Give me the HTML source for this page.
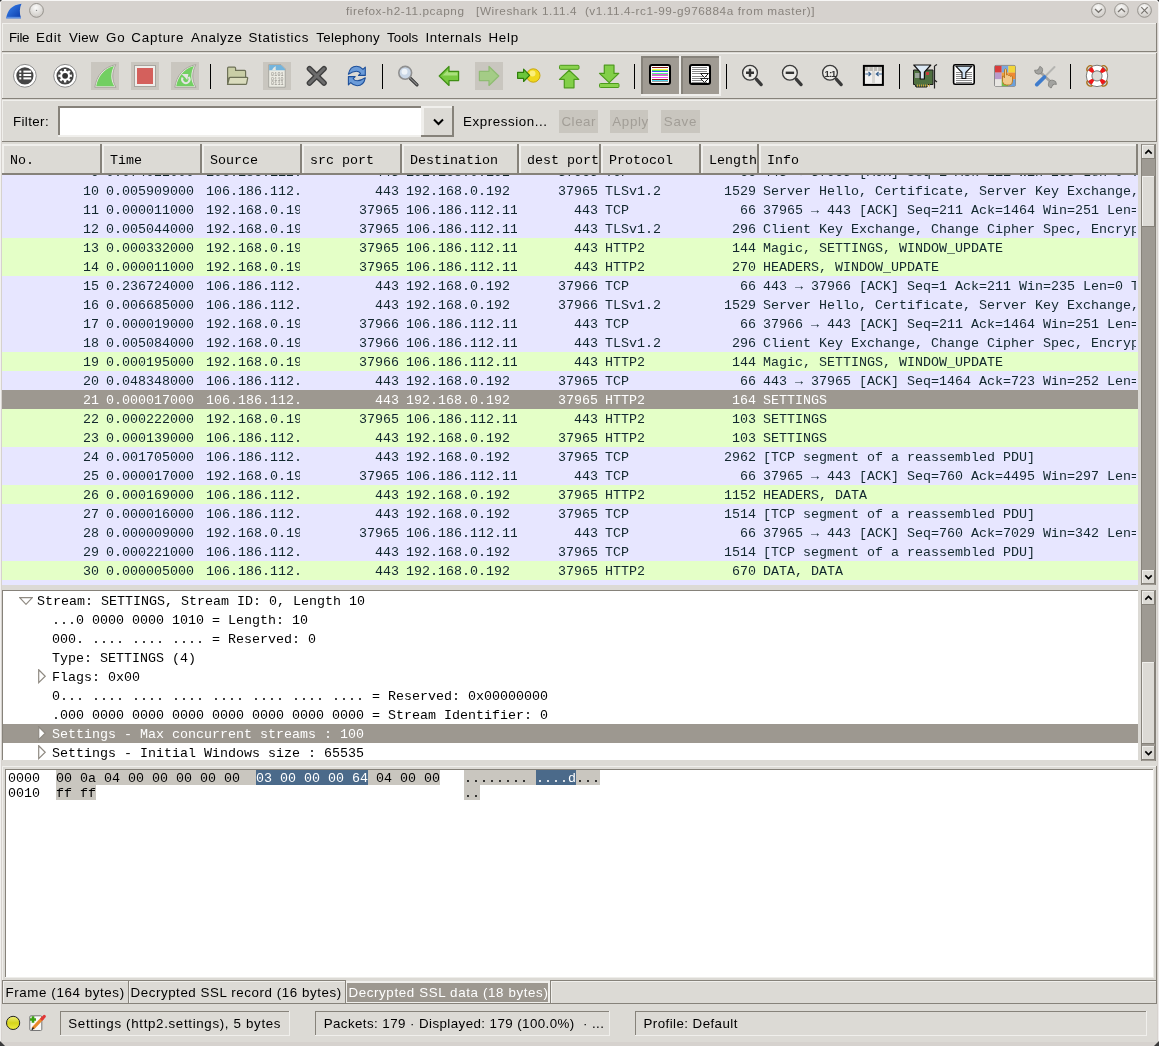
<!DOCTYPE html><html><head><meta charset="utf-8"><style>
html,body{margin:0;padding:0;}
body{width:1159px;height:1046px;overflow:hidden;position:relative;background:#dcdad5;font-family:"Liberation Sans", sans-serif;}
.a{position:absolute;}
.t{position:absolute;white-space:pre;font:13.33px/19px "Liberation Sans", sans-serif;letter-spacing:0.5px;}
.m{position:absolute;white-space:pre;font:13.33px/19px "Liberation Mono", monospace;}
svg{position:absolute;}
</style></head><body><div id="w" style="position:absolute;left:0;top:0;width:1159px;height:1046px;overflow:hidden;will-change:transform">
<div class="a" style="left:0px;top:0px;width:1159px;height:1046px;background:#dcdad5;"></div>
<div class="a" style="left:0px;top:0px;width:1159px;height:23px;background:#f4f3f2;"></div>
<div class="a" style="left:1px;top:1px;width:1157px;height:22px;background:#d6d2ce;border-top-right-radius:3px;border-top-left-radius:1px;"></div>
<div class="a" style="left:0px;top:0px;width:1px;height:1046px;background:#f2f1ef;"></div>
<div class="a" style="left:1px;top:23px;width:1px;height:1023px;background:#d6d2ce;"></div>
<div class="a" style="left:1157px;top:23px;width:1px;height:1023px;background:#d6d2ce;"></div>
<div class="a" style="left:1158px;top:23px;width:1px;height:1023px;background:#eeeceb;"></div>
<div class="t" style="left:346.0px;top:1px;color:#88837d;font:11.75px/19px 'Liberation Sans', sans-serif;letter-spacing:0.582px;">firefox-h2-11.pcapng   [Wireshark 1.11.4  (v1.11.4-rc1-99-g976884a from master)]</div>
<div class="a" style="left:0px;top:0px;width:1159px;height:1px;background:#f7f6f5;"></div>
<svg style="left:0;top:0" width="1159" height="23"><defs><radialGradient id="bg1" cx="0.45" cy="0.3" r="0.75"><stop offset="0" stop-color="#fbfbfa"/><stop offset="1" stop-color="#c9c5c0"/></radialGradient><linearGradient id="fin1" x1="0" y1="0" x2="1" y2="1"><stop offset="0" stop-color="#3b86f0"/><stop offset="1" stop-color="#0b3aa8"/></linearGradient></defs><path d="M6.2 18.3 C7.5 10 12 5 21.5 3.8 C19.5 8 19.3 13 21 18.3 Z" fill="url(#fin1)"/><rect x="6.2" y="16.8" width="14.8" height="1.6" fill="#5c8ee0"/><circle cx="36.5" cy="10.4" r="6.9" fill="url(#bg1)" stroke="#8f8b86" stroke-width="0.9"/><circle cx="1098.5" cy="10.4" r="6.9" fill="url(#bg1)" stroke="#8f8b86" stroke-width="0.9"/><circle cx="1121.5" cy="10.4" r="6.9" fill="url(#bg1)" stroke="#8f8b86" stroke-width="0.9"/><circle cx="1144.5" cy="10.4" r="6.9" fill="url(#bg1)" stroke="#8f8b86" stroke-width="0.9"/><circle cx="36.5" cy="10.4" r="0.7" fill="#888"/><path d="M1095 9 L1098.5 12.3 L1102 9" stroke="#76726d" stroke-width="1.3" fill="none"/><path d="M1118 12 L1121.5 8.7 L1125 12" stroke="#76726d" stroke-width="1.3" fill="none"/><path d="M1141.3 7.2 L1147.7 13.6 M1147.7 7.2 L1141.3 13.6" stroke="#76726d" stroke-width="1.2" fill="none"/></svg>
<div class="a" style="left:2px;top:23px;width:1155px;height:29px;background:#dcdad5;"></div>
<div class="a" style="left:2px;top:23px;width:1155px;height:1px;background:#f0efec;"></div>
<div class="a" style="left:2px;top:23px;width:1px;height:29px;background:#f0efec;"></div>
<div class="a" style="left:2px;top:51px;width:1155px;height:1px;background:#86827a;"></div>
<div class="a" style="left:1156px;top:23px;width:1px;height:29px;background:#86827a;"></div>
<div class="t" style="left:9.0px;top:28px;color:#000;letter-spacing:-0.333px;">File</div>
<div class="t" style="left:36.0px;top:28px;color:#000;letter-spacing:0.667px;">Edit</div>
<div class="t" style="left:69.0px;top:28px;color:#000;letter-spacing:0.333px;">View</div>
<div class="t" style="left:106.05px;top:28px;color:#000;letter-spacing:0.8px;">Go</div>
<div class="t" style="left:131.3px;top:28px;color:#000;letter-spacing:0.8px;">Capture</div>
<div class="t" style="left:191.1px;top:28px;color:#000;letter-spacing:0.567px;">Analyze</div>
<div class="t" style="left:248.5px;top:28px;color:#000;letter-spacing:0.722px;">Statistics</div>
<div class="t" style="left:316.3px;top:28px;color:#000;letter-spacing:0.325px;">Telephony</div>
<div class="t" style="left:387.1px;top:28px;color:#000;letter-spacing:0.0px;">Tools</div>
<div class="t" style="left:425.4px;top:28px;color:#000;letter-spacing:0.6px;">Internals</div>
<div class="t" style="left:488.4px;top:28px;color:#000;letter-spacing:0.8px;">Help</div>
<div class="a" style="left:2px;top:53px;width:1155px;height:1px;background:#f0efec;"></div>
<div class="a" style="left:2px;top:53px;width:1px;height:46px;background:#f0efec;"></div>
<div class="a" style="left:2px;top:98px;width:1155px;height:1px;background:#86827a;"></div>
<div class="a" style="left:1156px;top:53px;width:1px;height:46px;background:#86827a;"></div>
<svg style="left:0;top:0" width="1159" height="100"><rect x="91" y="62" width="28" height="28" fill="#c9c6bf"/><rect x="131" y="62" width="28" height="28" fill="#c9c6bf"/><rect x="171" y="62" width="28" height="28" fill="#c9c6bf"/><rect x="263" y="62" width="28" height="28" fill="#c9c6bf"/><rect x="475" y="62" width="28" height="28" fill="#c9c6bf"/><rect x="210" y="64" width="1" height="25" fill="#000"/><rect x="382" y="64" width="1" height="25" fill="#000"/><rect x="634" y="64" width="1" height="25" fill="#000"/><rect x="726" y="64" width="1" height="25" fill="#000"/><rect x="899" y="64" width="1" height="25" fill="#000"/><rect x="1070" y="64" width="1" height="25" fill="#000"/><rect x="641" y="56" width="40" height="40" fill="#f0efec"/><rect x="641" y="56" width="38" height="38" fill="#86827a"/><rect x="643" y="58" width="36" height="36" fill="#a09b93"/><rect x="681" y="56" width="40" height="40" fill="#f0efec"/><rect x="681" y="56" width="38" height="38" fill="#86827a"/><rect x="683" y="58" width="36" height="36" fill="#a09b93"/><circle cx="24.9" cy="75.8" r="11.4" fill="#fff" stroke="#8d8d8d" stroke-width="1"/><circle cx="24.9" cy="75.8" r="8.6" fill="#454545"/><rect x="19.3" y="70.6" width="2" height="2" fill="#fff"/><rect x="23.4" y="70.6" width="7.8" height="2" fill="#fff"/><rect x="19.3" y="74.0" width="2" height="2" fill="#fff"/><rect x="23.4" y="74.0" width="7.8" height="2" fill="#fff"/><rect x="19.3" y="77.4" width="2" height="2" fill="#fff"/><rect x="23.4" y="77.4" width="7.8" height="2" fill="#fff"/><circle cx="65.1" cy="75.8" r="11.4" fill="#fff" stroke="#8d8d8d" stroke-width="1"/><circle cx="65.1" cy="75.8" r="8.6" fill="#454545"/><path d="M69.99 74.75 L71.89 74.59 L71.89 77.01 L69.99 76.85 L69.78 77.55 L69.30 78.51 L70.76 79.75 L69.05 81.46 L67.81 80.00 L67.18 80.35 L66.15 80.69 L66.31 82.59 L63.89 82.59 L64.05 80.69 L63.35 80.48 L62.39 80.00 L61.15 81.46 L59.44 79.75 L60.90 78.51 L60.55 77.88 L60.21 76.85 L58.31 77.01 L58.31 74.59 L60.21 74.75 L60.42 74.05 L60.90 73.09 L59.44 71.85 L61.15 70.14 L62.39 71.60 L63.02 71.25 L64.05 70.91 L63.89 69.01 L66.31 69.01 L66.15 70.91 L66.85 71.12 L67.81 71.60 L69.05 70.14 L70.76 71.85 L69.30 73.09 L69.65 73.72 Z" fill="#fff"/><circle cx="65.1" cy="75.8" r="2.9" fill="#333"/><path d="M94.8 87.3 C96.5 76 103 67.2 115.8 64.6 C112 72 111.5 80 116 87.3 Z" fill="#eceae5" stroke="#a9a59e" stroke-width="1"/><path d="M96.2 86.2 C98 77 103.5 68.8 114 66 C110.6 72.5 110.2 80 114.3 86.2 Z" fill="#72cf62"/><rect x="134.5" y="65.5" width="21" height="21" fill="#efeeeb" stroke="#a7a49e" stroke-width="1"/><rect x="137" y="68" width="16" height="16" fill="#d4605c"/><path d="M174.8 87.3 C176.5 76 183 67.2 195.8 64.6 C192 72 191.5 80 196 87.3 Z" fill="#eceae5" stroke="#a9a59e" stroke-width="1"/><path d="M176.2 86.2 C178 77 183.5 68.8 194 66 C190.6 72.5 190.2 80 194.3 86.2 Z" fill="#72cf62"/><path d="M188.6 76.9 A3.7 3.7 0 1 1 182.6 77.6" fill="none" stroke="#e6e4e4" stroke-width="2"/><path d="M181.6 74 L188.4 74 L187.2 80 L185.2 77.4 Z" fill="#e6e4e4"/><path d="M227.6 84.4 L227.6 68.2 Q227.6 67.2 228.6 67.2 L234.6 67.2 Q235.6 67.2 235.6 68.2 L235.6 70.4 L244.6 70.4 Q245.6 70.4 245.6 71.4 L245.6 78 L229 78 Z" fill="#c9cea6" stroke="#6d7157" stroke-width="1.2"/><path d="M227.6 84.4 L229.3 78 Q229.5 77.4 230.3 77.4 L247 77.4 Q247.8 77.4 247.7 78.2 L246.6 83.6 Q246.4 84.4 245.6 84.4 Z" fill="#dadcbd" stroke="#6d7157" stroke-width="1.2"/><path d="M268.7 64.7 L281 64.7 L285.2 68.9 L285.2 87.2 L268.7 87.2 Z" fill="#ecebe3" stroke="#9c9994" stroke-width="0.8"/><path d="M269.1 65.1 L281 65.1 L285 69 L285 70.2 L269.1 70.2 Z" fill="#74b4dc"/><path d="M272 70.2 C273 68 274.5 66.5 276 66.2 C275.5 67.5 275.5 69 276 70.2 Z" fill="#e8e8e2"/><text x="271.0" y="76.3" font-family="Liberation Mono" font-size="5" fill="#8e8c86">0</text><text x="274.2" y="76.3" font-family="Liberation Mono" font-size="5" fill="#8e8c86">1</text><text x="277.4" y="76.3" font-family="Liberation Mono" font-size="5" fill="#8e8c86">0</text><text x="280.6" y="76.3" font-family="Liberation Mono" font-size="5" fill="#8e8c86">1</text><text x="271.0" y="80.6" font-family="Liberation Mono" font-size="5" fill="#8e8c86">0</text><text x="274.2" y="80.6" font-family="Liberation Mono" font-size="5" fill="#8e8c86">1</text><text x="277.4" y="80.6" font-family="Liberation Mono" font-size="5" fill="#8e8c86">1</text><text x="280.6" y="80.6" font-family="Liberation Mono" font-size="5" fill="#8e8c86">0</text><text x="271.0" y="84.89999999999999" font-family="Liberation Mono" font-size="5" fill="#8e8c86">0</text><text x="274.2" y="84.89999999999999" font-family="Liberation Mono" font-size="5" fill="#8e8c86">1</text><text x="277.4" y="84.89999999999999" font-family="Liberation Mono" font-size="5" fill="#8e8c86">1</text><text x="280.6" y="84.89999999999999" font-family="Liberation Mono" font-size="5" fill="#8e8c86">1</text><path d="M309.5 68.8 L324 83 M324 68.8 L309.5 83" stroke="#3e3e3e" stroke-width="5.6" stroke-linecap="round"/><path d="M309.5 68.8 L324 83 M324 68.8 L309.5 83" stroke="#6c6c6c" stroke-width="3" stroke-linecap="round"/><path d="M348.4 74.2 C349.5 68.5 353 66.3 356.6 66.3 C359.5 66.3 361.5 67.8 363 69.4 L365.3 67.2 L365.3 75.4 L358.5 75.4 L360.5 73.3 C359.6 72 358.3 71.2 356.4 71.2 C353 71.2 351 72.5 348.4 74.2 Z" fill="#6b9bd8" stroke="#1d4f9a" stroke-width="1.1" stroke-linejoin="round"/><path d="M365.3 77.8 C364.2 83.5 360.7 85.7 357.1 85.7 C354.2 85.7 352.2 84.2 350.7 82.6 L348.4 84.8 L348.4 76.6 L355.2 76.6 L353.2 78.7 C354.1 80 355.4 80.8 357.3 80.8 C360.7 80.8 362.7 79.5 365.3 77.8 Z" fill="#6b9bd8" stroke="#1d4f9a" stroke-width="1.1" stroke-linejoin="round"/><path d="M410.5 78.5 L417 84.8" stroke="#333" stroke-width="3.2" stroke-linecap="round"/><path d="M410.5 78.5 L417 84.8" stroke="#888" stroke-width="1.2" stroke-linecap="round"/><circle cx="405.2" cy="72.8" r="6.4" fill="#c9d6e6" stroke="#8f8f8f" stroke-width="1.6"/><circle cx="404.5" cy="71.8" r="3" fill="#eef3f8"/><path d="M439.2 76 L449 66.5 L449 71.3 L458.6 71.3 L458.6 80.6 L449 80.6 L449 85.5 Z" fill="#78c940" stroke="#3f8f14" stroke-width="1.2" stroke-linejoin="round"/><path d="M442 76 L448 70.2 L448 72.5 L457.4 72.5 L457.4 75.5 L442.5 75.5 Z" fill="#a9e07c"/><path d="M498.8 76 L489 66.5 L489 71.3 L479.4 71.3 L479.4 80.6 L489 80.6 L489 85.5 Z" fill="#a4cc86" stroke="#8fbc72" stroke-width="1.2" stroke-linejoin="round"/><circle cx="533.3" cy="75.5" r="6.7" fill="#f0d81c" stroke="#c9a710" stroke-width="1"/><circle cx="532.5" cy="73.5" r="3" fill="#fbef7a"/><path d="M529.6 75.3 L523.6 69.2 L523.6 72.3 L517.6 72.3 L517.6 78.3 L523.6 78.3 L523.6 81.5 Z" fill="#6cc63c" stroke="#2f7f0a" stroke-width="1.2" stroke-linejoin="round"/><rect x="559.5" y="65.3" width="19.5" height="4" rx="1" fill="#8ad24e" stroke="#4c9a1c" stroke-width="1"/><path d="M569.2 70.2 L578.8 79.4 L574 79.4 L574 87.8 L564.3 87.8 L564.3 79.4 L559.5 79.4 Z" fill="#82cf48" stroke="#4c9a1c" stroke-width="1.2" stroke-linejoin="round"/><rect x="599.5" y="83.5" width="19.5" height="4" rx="1" fill="#8ad24e" stroke="#4c9a1c" stroke-width="1"/><path d="M609.2 82.6 L618.8 73.4 L614 73.4 L614 65.2 L604.3 65.2 L604.3 73.4 L599.5 73.4 Z" fill="#82cf48" stroke="#4c9a1c" stroke-width="1.2" stroke-linejoin="round"/><rect x="650" y="65" width="20" height="19" rx="2" fill="#fff" stroke="#000" stroke-width="2"/><rect x="652" y="67" width="16" height="1" fill="#8a1c1c"/><rect x="652" y="69" width="16" height="1" fill="#ffff50"/><rect x="652" y="70" width="16" height="1" fill="#50e860"/><rect x="652" y="71" width="16" height="1" fill="#4a4aff"/><rect x="652" y="73" width="16" height="1" fill="#50f090"/><rect x="652" y="74" width="16" height="1" fill="#f050f0"/><rect x="652" y="75" width="16" height="1" fill="#a0a0a0"/><rect x="652" y="77" width="16" height="1" fill="#ff55ff"/><rect x="652" y="79" width="16" height="1" fill="#8a1c1c"/><rect x="652" y="80" width="16" height="1" fill="#50d8f0"/><rect x="652" y="81" width="16" height="1" fill="#a0a0a0"/><rect x="690" y="65" width="20" height="19" rx="2" fill="#fff" stroke="#000" stroke-width="2"/><rect x="692" y="67" width="15" height="1" fill="#8a8a8a"/><rect x="692" y="69" width="15" height="1" fill="#8a8a8a"/><rect x="692" y="71" width="15" height="1" fill="#8a8a8a"/><rect x="692" y="73" width="15" height="1" fill="#8a8a8a"/><rect x="692" y="76" width="15" height="1" fill="#8a8a8a"/><rect x="692" y="78" width="15" height="1" fill="#8a8a8a"/><rect x="692" y="80" width="15" height="1" fill="#8a8a8a"/><rect x="692" y="82" width="15" height="1" fill="#8a8a8a"/><path d="M700.5 73.5 L708.5 73.5 L704.5 77.5 Z M700.5 78.5 L708.5 78.5 L704.5 82.5 Z" fill="#fff" stroke="#222" stroke-width="1"/><path d="M756.5 79.3 L761.2 84.6" stroke="#3a3a3a" stroke-width="3.3" stroke-linecap="round"/><circle cx="750" cy="72.8" r="7.4" fill="#ecebe7" stroke="#3a3a3a" stroke-width="1.3"/><path d="M746 72.8 L754 72.8 M750 68.8 L750 76.8" stroke="#333" stroke-width="2.4"/><path d="M796.4 79.3 L801.1 84.6" stroke="#3a3a3a" stroke-width="3.3" stroke-linecap="round"/><circle cx="789.9" cy="72.8" r="7.4" fill="#ecebe7" stroke="#3a3a3a" stroke-width="1.3"/><path d="M785.7 72.8 L794.1 72.8" stroke="#333" stroke-width="2.4"/><path d="M836.5 79.3 L841.2 84.6" stroke="#3a3a3a" stroke-width="3.3" stroke-linecap="round"/><circle cx="830" cy="72.8" r="7.4" fill="#ecebe7" stroke="#3a3a3a" stroke-width="1.3"/><text x="824.6" y="76.6" font-family="Liberation Sans" font-weight="bold" font-size="9.5" fill="#333" letter-spacing="-1">1:1</text><rect x="863.9" y="65.9" width="19" height="19" fill="#f2f1ef" stroke="#000" stroke-width="2"/><rect x="865" y="67" width="17" height="4" fill="#bdbbb6"/><rect x="868.5" y="67" width="0.8" height="4" fill="#f3f3f3"/><rect x="872.9" y="67" width="0.8" height="4" fill="#f3f3f3"/><rect x="877.3" y="67" width="0.8" height="4" fill="#f3f3f3"/><rect x="872" y="71" width="3" height="13" fill="#d8d7d3"/><path d="M865.3 74 L870.5 74 M868.5 72 L870.8 74 L868.5 76 M882 74 L876.6 74 M878.6 72 L876.3 74 L878.6 76" stroke="#3c6490" stroke-width="1.2" fill="none"/><path d="M913.5 70 L933 70 L933 84.5 L928 84.5 L927 87 L916 87 L915 84.5 L913.5 84.5 Z" fill="#4f7040" stroke="#1c1c1c" stroke-width="1"/><rect x="915" y="73" width="6" height="5" fill="#9aa59a"/><rect x="922" y="72" width="3" height="3" fill="#c83c3c"/><rect x="926" y="72" width="3" height="3" fill="#c83c3c"/><rect x="917" y="84.5" width="1" height="2" fill="#d0a640"/><rect x="919" y="84.5" width="1" height="2" fill="#d0a640"/><rect x="921" y="84.5" width="1" height="2" fill="#d0a640"/><rect x="923" y="84.5" width="1" height="2" fill="#d0a640"/><rect x="925" y="84.5" width="1" height="2" fill="#d0a640"/><rect x="927" y="84.5" width="1" height="2" fill="#d0a640"/><rect x="929" y="84.5" width="1" height="2" fill="#d0a640"/><path d="M934.5 66 L934.5 88.5 M934.5 66 L937 64.5 M934.5 80 L937 82" stroke="#222" stroke-width="1.2" fill="none"/><path d="M913.8 65 L930.8 65 L924.4 72.2 L924.4 79 L920.2 79 L920.2 72.2 Z" fill="#dce9f5" stroke="#111" stroke-width="1.2" stroke-linejoin="round"/><rect x="953.6" y="64.8" width="20.6" height="19.4" rx="1.5" fill="#fff" stroke="#000" stroke-width="1.6"/><rect x="956" y="72" width="16" height="1" fill="#8a8a8a"/><rect x="956" y="74" width="16" height="1" fill="#8a8a8a"/><rect x="956" y="76" width="16" height="1" fill="#8a8a8a"/><rect x="956" y="78" width="16" height="1" fill="#8a8a8a"/><rect x="956" y="80" width="16" height="1" fill="#8a8a8a"/><rect x="956" y="82" width="16" height="1" fill="#8a8a8a"/><path d="M955.8 66.2 L972 66.2 L965.8 72.5 L965.8 78.5 L962 78.5 L962 72.5 Z" fill="#d2e4f4" stroke="#111" stroke-width="1.1" stroke-linejoin="round"/><rect x="994.5" y="65.4" width="21" height="21" rx="1.5" fill="#e8e6e2" stroke="#8a8a8a" stroke-width="1"/><rect x="995.0" y="65.9" width="6.8" height="6.8" fill="#d93c3c"/><rect x="1001.7" y="65.9" width="6.8" height="6.8" fill="#7aa6dc"/><rect x="1008.4" y="65.9" width="6.8" height="6.8" fill="#f2d63a"/><rect x="995.0" y="72.6" width="6.8" height="6.8" fill="#b99acb"/><rect x="1001.7" y="72.6" width="6.8" height="6.8" fill="#f0a040"/><rect x="1008.4" y="72.6" width="6.8" height="6.8" fill="#ef8a33"/><rect x="995.0" y="79.3" width="6.8" height="6.8" fill="#e8e6e2"/><rect x="1001.7" y="79.3" width="6.8" height="6.8" fill="#6fc04a"/><rect x="1008.4" y="79.3" width="6.8" height="6.8" fill="#6aa0dc"/><path d="M1002.5 76 L1002.5 81.5 Q1003 85 1006.5 85 L1010 85 Q1012.5 84.5 1012.5 81 L1012.5 76.5 Q1011.5 75.5 1010.5 76.5 Q1010 74.5 1008.5 75.5 Q1008 74 1006.5 75 L1006.5 69.5 Q1005.5 68 1004.5 69.5 L1004.5 78 Q1003.5 75 1002.5 76 Z" fill="#f2c98a" stroke="#b8741e" stroke-width="0.9"/><path d="M1038.5 70.5 L1053 84" stroke="#a3a3a0" stroke-width="2.6" stroke-linecap="round"/><path d="M1034.6 70.2 A4 4 0 1 0 1039.8 66.4 L1038.2 69.8 L1036.4 70.2 Z" fill="#a3a3a0" stroke="#7d7d7a" stroke-width="0.8"/><path d="M1056.4 84.4 A4 4 0 1 0 1051.2 88 L1052.8 84.8 L1054.6 84.2 Z" fill="#a3a3a0" stroke="#7d7d7a" stroke-width="0.8"/><path d="M1054.5 67 L1045 76.5" stroke="#b5b5b2" stroke-width="2" stroke-linecap="round"/><path d="M1044.5 77 L1036.8 84.6" stroke="#3f7ccc" stroke-width="3.8" stroke-linecap="round"/><circle cx="1097" cy="75.9" r="7.9" fill="none" stroke="#fff" stroke-width="5.6"/><circle cx="1097" cy="75.9" r="7.9" fill="none" stroke="#f01818" stroke-width="5.6" stroke-dasharray="4 8.4" stroke-dashoffset="-4.2"/><circle cx="1097" cy="75.9" r="10.7" fill="none" stroke="#7a7a7a" stroke-width="1"/><circle cx="1097" cy="75.9" r="5.1" fill="#dcdad5" stroke="#7a7a7a" stroke-width="1"/><path d="M1087.55 71.46 A3.6 3.6 0 0 1 1092.56 66.45" fill="none" stroke="#a8701c" stroke-width="1.3"/><path d="M1101.44 66.45 A3.6 3.6 0 0 1 1106.45 71.46" fill="none" stroke="#a8701c" stroke-width="1.3"/><path d="M1092.56 85.35 A3.6 3.6 0 0 1 1087.55 80.34" fill="none" stroke="#a8701c" stroke-width="1.3"/><path d="M1106.45 80.34 A3.6 3.6 0 0 1 1101.44 85.35" fill="none" stroke="#a8701c" stroke-width="1.3"/></svg>
<div class="a" style="left:2px;top:100px;width:1155px;height:1px;background:#f0efec;"></div>
<div class="a" style="left:2px;top:100px;width:1px;height:42px;background:#f0efec;"></div>
<div class="a" style="left:2px;top:141px;width:1155px;height:1px;background:#86827a;"></div>
<div class="a" style="left:1156px;top:100px;width:1px;height:42px;background:#86827a;"></div>
<div class="t" style="left:13.0px;top:112px;color:#000;letter-spacing:0.383px;">Filter:</div>
<div class="a" style="left:58px;top:106px;width:366px;height:31px;background:#ffffff;"></div>
<div class="a" style="left:58px;top:106px;width:366px;height:2px;background:#86827a;"></div>
<div class="a" style="left:58px;top:106px;width:2px;height:31px;background:#86827a;"></div>
<div class="a" style="left:58px;top:135px;width:366px;height:2px;background:#f0efec;"></div>
<div class="a" style="left:421px;top:106px;width:33px;height:31px;background:#dcdad5;"></div>
<div class="a" style="left:421px;top:106px;width:33px;height:2px;background:#f0efec;"></div>
<div class="a" style="left:421px;top:106px;width:3px;height:31px;background:#f0efec;"></div>
<div class="a" style="left:421px;top:135px;width:33px;height:2px;background:#86827a;"></div>
<div class="a" style="left:452px;top:106px;width:2px;height:31px;background:#86827a;"></div>
<svg style="left:433px;top:118px" width="11" height="8"><path d="M1 1.5 L5.5 6 L10 1.5" stroke="#000" stroke-width="2" fill="none"/></svg>
<div class="t" style="left:463.0px;top:112px;color:#000;letter-spacing:0.583px;">Expression...</div>
<div class="a" style="left:559px;top:110px;width:39px;height:23px;background:#c9c6bf;"></div>
<div class="t" style="left:561.4px;top:112px;color:#a29e97;letter-spacing:0.575px;">Clear</div>
<div class="a" style="left:610px;top:110px;width:38px;height:23px;background:#c9c6bf;"></div>
<div class="t" style="left:612.3px;top:112px;color:#a29e97;letter-spacing:0.65px;">Apply</div>
<div class="a" style="left:661px;top:110px;width:39px;height:23px;background:#c9c6bf;"></div>
<div class="t" style="left:663.7px;top:112px;color:#a29e97;letter-spacing:0.8px;">Save</div>
<div class="a" style="left:2px;top:143px;width:1155px;height:442px;background:#dcdad5;"></div>
<div class="a" style="left:2px;top:144px;width:1136px;height:31px;background:#dcdad5;"></div>
<div class="a" style="left:2px;top:144px;width:100px;height:2px;background:#f0efec;"></div>
<div class="a" style="left:2px;top:144px;width:2px;height:31px;background:#f0efec;"></div>
<div class="a" style="left:2px;top:173px;width:100px;height:2px;background:#86827a;"></div>
<div class="a" style="left:100px;top:144px;width:2px;height:31px;background:#86827a;"></div>
<div class="m" style="left:10px;top:151px;width:89px;overflow:hidden;color:#000">No.</div>
<div class="a" style="left:102px;top:144px;width:100px;height:2px;background:#f0efec;"></div>
<div class="a" style="left:102px;top:144px;width:2px;height:31px;background:#f0efec;"></div>
<div class="a" style="left:102px;top:173px;width:100px;height:2px;background:#86827a;"></div>
<div class="a" style="left:200px;top:144px;width:2px;height:31px;background:#86827a;"></div>
<div class="m" style="left:110px;top:151px;width:89px;overflow:hidden;color:#000">Time</div>
<div class="a" style="left:202px;top:144px;width:100px;height:2px;background:#f0efec;"></div>
<div class="a" style="left:202px;top:144px;width:2px;height:31px;background:#f0efec;"></div>
<div class="a" style="left:202px;top:173px;width:100px;height:2px;background:#86827a;"></div>
<div class="a" style="left:300px;top:144px;width:2px;height:31px;background:#86827a;"></div>
<div class="m" style="left:210px;top:151px;width:89px;overflow:hidden;color:#000">Source</div>
<div class="a" style="left:302px;top:144px;width:100px;height:2px;background:#f0efec;"></div>
<div class="a" style="left:302px;top:144px;width:2px;height:31px;background:#f0efec;"></div>
<div class="a" style="left:302px;top:173px;width:100px;height:2px;background:#86827a;"></div>
<div class="a" style="left:400px;top:144px;width:2px;height:31px;background:#86827a;"></div>
<div class="m" style="left:310px;top:151px;width:89px;overflow:hidden;color:#000">src port</div>
<div class="a" style="left:402px;top:144px;width:117px;height:2px;background:#f0efec;"></div>
<div class="a" style="left:402px;top:144px;width:2px;height:31px;background:#f0efec;"></div>
<div class="a" style="left:402px;top:173px;width:117px;height:2px;background:#86827a;"></div>
<div class="a" style="left:517px;top:144px;width:2px;height:31px;background:#86827a;"></div>
<div class="m" style="left:410px;top:151px;width:106px;overflow:hidden;color:#000">Destination</div>
<div class="a" style="left:519px;top:144px;width:82px;height:2px;background:#f0efec;"></div>
<div class="a" style="left:519px;top:144px;width:2px;height:31px;background:#f0efec;"></div>
<div class="a" style="left:519px;top:173px;width:82px;height:2px;background:#86827a;"></div>
<div class="a" style="left:599px;top:144px;width:2px;height:31px;background:#86827a;"></div>
<div class="m" style="left:527px;top:151px;width:71px;overflow:hidden;color:#000">dest port</div>
<div class="a" style="left:601px;top:144px;width:100px;height:2px;background:#f0efec;"></div>
<div class="a" style="left:601px;top:144px;width:2px;height:31px;background:#f0efec;"></div>
<div class="a" style="left:601px;top:173px;width:100px;height:2px;background:#86827a;"></div>
<div class="a" style="left:699px;top:144px;width:2px;height:31px;background:#86827a;"></div>
<div class="m" style="left:609px;top:151px;width:89px;overflow:hidden;color:#000">Protocol</div>
<div class="a" style="left:701px;top:144px;width:58px;height:2px;background:#f0efec;"></div>
<div class="a" style="left:701px;top:144px;width:2px;height:31px;background:#f0efec;"></div>
<div class="a" style="left:701px;top:173px;width:58px;height:2px;background:#86827a;"></div>
<div class="a" style="left:757px;top:144px;width:2px;height:31px;background:#86827a;"></div>
<div class="m" style="left:709px;top:151px;width:47px;overflow:hidden;color:#000">Length</div>
<div class="a" style="left:759px;top:144px;width:379px;height:2px;background:#f0efec;"></div>
<div class="a" style="left:759px;top:144px;width:2px;height:31px;background:#f0efec;"></div>
<div class="a" style="left:759px;top:173px;width:379px;height:2px;background:#86827a;"></div>
<div class="a" style="left:1136px;top:144px;width:2px;height:31px;background:#86827a;"></div>
<div class="m" style="left:767px;top:151px;width:368px;overflow:hidden;color:#000">Info</div>
<div class="a" style="left:2px;top:175px;width:1136px;height:410px;overflow:hidden">
<div class="a" style="left:0;top:-13px;width:1136px;height:19px;background:#e7e6ff;color:#12272e">
<div class="m" style="left:0px;top:1px;width:97px;text-align:right;overflow:hidden">9</div>
<div class="m" style="left:104px;top:1px;width:94px;overflow:hidden">0.074022000</div>
<div class="m" style="left:204px;top:1px;width:94px;overflow:hidden">106.186.112.</div>
<div class="m" style="left:300px;top:1px;width:97px;text-align:right;overflow:hidden">443</div>
<div class="m" style="left:404px;top:1px;width:111px;overflow:hidden">192.168.0.192</div>
<div class="m" style="left:517px;top:1px;width:79px;text-align:right;overflow:hidden">37965</div>
<div class="m" style="left:603px;top:1px;width:94px;overflow:hidden">TCP</div>
<div class="m" style="left:699px;top:1px;width:55px;text-align:right;overflow:hidden">66</div>
<div class="m" style="left:761px;top:1px;width:373px;overflow:hidden">443 → 37965 [ACK] Seq=1 Ack=211 Win=235 Len=0 TSval</div>
</div>
<div class="a" style="left:0;top:6px;width:1136px;height:19px;background:#e7e6ff;color:#12272e">
<div class="m" style="left:0px;top:1px;width:97px;text-align:right;overflow:hidden">10</div>
<div class="m" style="left:104px;top:1px;width:94px;overflow:hidden">0.005909000</div>
<div class="m" style="left:204px;top:1px;width:94px;overflow:hidden">106.186.112.</div>
<div class="m" style="left:300px;top:1px;width:97px;text-align:right;overflow:hidden">443</div>
<div class="m" style="left:404px;top:1px;width:111px;overflow:hidden">192.168.0.192</div>
<div class="m" style="left:517px;top:1px;width:79px;text-align:right;overflow:hidden">37965</div>
<div class="m" style="left:603px;top:1px;width:94px;overflow:hidden">TLSv1.2</div>
<div class="m" style="left:699px;top:1px;width:55px;text-align:right;overflow:hidden">1529</div>
<div class="m" style="left:761px;top:1px;width:373px;overflow:hidden">Server Hello, Certificate, Server Key Exchange, Server Hello Done</div>
</div>
<div class="a" style="left:0;top:25px;width:1136px;height:19px;background:#e7e6ff;color:#12272e">
<div class="m" style="left:0px;top:1px;width:97px;text-align:right;overflow:hidden">11</div>
<div class="m" style="left:104px;top:1px;width:94px;overflow:hidden">0.000011000</div>
<div class="m" style="left:204px;top:1px;width:94px;overflow:hidden">192.168.0.192</div>
<div class="m" style="left:300px;top:1px;width:97px;text-align:right;overflow:hidden">37965</div>
<div class="m" style="left:404px;top:1px;width:111px;overflow:hidden">106.186.112.116</div>
<div class="m" style="left:517px;top:1px;width:79px;text-align:right;overflow:hidden">443</div>
<div class="m" style="left:603px;top:1px;width:94px;overflow:hidden">TCP</div>
<div class="m" style="left:699px;top:1px;width:55px;text-align:right;overflow:hidden">66</div>
<div class="m" style="left:761px;top:1px;width:373px;overflow:hidden">37965 → 443 [ACK] Seq=211 Ack=1464 Win=251 Len=0</div>
</div>
<div class="a" style="left:0;top:44px;width:1136px;height:19px;background:#e7e6ff;color:#12272e">
<div class="m" style="left:0px;top:1px;width:97px;text-align:right;overflow:hidden">12</div>
<div class="m" style="left:104px;top:1px;width:94px;overflow:hidden">0.005044000</div>
<div class="m" style="left:204px;top:1px;width:94px;overflow:hidden">192.168.0.192</div>
<div class="m" style="left:300px;top:1px;width:97px;text-align:right;overflow:hidden">37965</div>
<div class="m" style="left:404px;top:1px;width:111px;overflow:hidden">106.186.112.116</div>
<div class="m" style="left:517px;top:1px;width:79px;text-align:right;overflow:hidden">443</div>
<div class="m" style="left:603px;top:1px;width:94px;overflow:hidden">TLSv1.2</div>
<div class="m" style="left:699px;top:1px;width:55px;text-align:right;overflow:hidden">296</div>
<div class="m" style="left:761px;top:1px;width:373px;overflow:hidden">Client Key Exchange, Change Cipher Spec, Encrypted Handshake</div>
</div>
<div class="a" style="left:0;top:63px;width:1136px;height:19px;background:#e4ffc7;color:#12272e">
<div class="m" style="left:0px;top:1px;width:97px;text-align:right;overflow:hidden">13</div>
<div class="m" style="left:104px;top:1px;width:94px;overflow:hidden">0.000332000</div>
<div class="m" style="left:204px;top:1px;width:94px;overflow:hidden">192.168.0.192</div>
<div class="m" style="left:300px;top:1px;width:97px;text-align:right;overflow:hidden">37965</div>
<div class="m" style="left:404px;top:1px;width:111px;overflow:hidden">106.186.112.116</div>
<div class="m" style="left:517px;top:1px;width:79px;text-align:right;overflow:hidden">443</div>
<div class="m" style="left:603px;top:1px;width:94px;overflow:hidden">HTTP2</div>
<div class="m" style="left:699px;top:1px;width:55px;text-align:right;overflow:hidden">144</div>
<div class="m" style="left:761px;top:1px;width:373px;overflow:hidden">Magic, SETTINGS, WINDOW_UPDATE</div>
</div>
<div class="a" style="left:0;top:82px;width:1136px;height:19px;background:#e4ffc7;color:#12272e">
<div class="m" style="left:0px;top:1px;width:97px;text-align:right;overflow:hidden">14</div>
<div class="m" style="left:104px;top:1px;width:94px;overflow:hidden">0.000011000</div>
<div class="m" style="left:204px;top:1px;width:94px;overflow:hidden">192.168.0.192</div>
<div class="m" style="left:300px;top:1px;width:97px;text-align:right;overflow:hidden">37965</div>
<div class="m" style="left:404px;top:1px;width:111px;overflow:hidden">106.186.112.116</div>
<div class="m" style="left:517px;top:1px;width:79px;text-align:right;overflow:hidden">443</div>
<div class="m" style="left:603px;top:1px;width:94px;overflow:hidden">HTTP2</div>
<div class="m" style="left:699px;top:1px;width:55px;text-align:right;overflow:hidden">270</div>
<div class="m" style="left:761px;top:1px;width:373px;overflow:hidden">HEADERS, WINDOW_UPDATE</div>
</div>
<div class="a" style="left:0;top:101px;width:1136px;height:19px;background:#e7e6ff;color:#12272e">
<div class="m" style="left:0px;top:1px;width:97px;text-align:right;overflow:hidden">15</div>
<div class="m" style="left:104px;top:1px;width:94px;overflow:hidden">0.236724000</div>
<div class="m" style="left:204px;top:1px;width:94px;overflow:hidden">106.186.112.</div>
<div class="m" style="left:300px;top:1px;width:97px;text-align:right;overflow:hidden">443</div>
<div class="m" style="left:404px;top:1px;width:111px;overflow:hidden">192.168.0.192</div>
<div class="m" style="left:517px;top:1px;width:79px;text-align:right;overflow:hidden">37966</div>
<div class="m" style="left:603px;top:1px;width:94px;overflow:hidden">TCP</div>
<div class="m" style="left:699px;top:1px;width:55px;text-align:right;overflow:hidden">66</div>
<div class="m" style="left:761px;top:1px;width:373px;overflow:hidden">443 → 37966 [ACK] Seq=1 Ack=211 Win=235 Len=0 TSval</div>
</div>
<div class="a" style="left:0;top:120px;width:1136px;height:19px;background:#e7e6ff;color:#12272e">
<div class="m" style="left:0px;top:1px;width:97px;text-align:right;overflow:hidden">16</div>
<div class="m" style="left:104px;top:1px;width:94px;overflow:hidden">0.006685000</div>
<div class="m" style="left:204px;top:1px;width:94px;overflow:hidden">106.186.112.</div>
<div class="m" style="left:300px;top:1px;width:97px;text-align:right;overflow:hidden">443</div>
<div class="m" style="left:404px;top:1px;width:111px;overflow:hidden">192.168.0.192</div>
<div class="m" style="left:517px;top:1px;width:79px;text-align:right;overflow:hidden">37966</div>
<div class="m" style="left:603px;top:1px;width:94px;overflow:hidden">TLSv1.2</div>
<div class="m" style="left:699px;top:1px;width:55px;text-align:right;overflow:hidden">1529</div>
<div class="m" style="left:761px;top:1px;width:373px;overflow:hidden">Server Hello, Certificate, Server Key Exchange, Server Hello Done</div>
</div>
<div class="a" style="left:0;top:139px;width:1136px;height:19px;background:#e7e6ff;color:#12272e">
<div class="m" style="left:0px;top:1px;width:97px;text-align:right;overflow:hidden">17</div>
<div class="m" style="left:104px;top:1px;width:94px;overflow:hidden">0.000019000</div>
<div class="m" style="left:204px;top:1px;width:94px;overflow:hidden">192.168.0.192</div>
<div class="m" style="left:300px;top:1px;width:97px;text-align:right;overflow:hidden">37966</div>
<div class="m" style="left:404px;top:1px;width:111px;overflow:hidden">106.186.112.116</div>
<div class="m" style="left:517px;top:1px;width:79px;text-align:right;overflow:hidden">443</div>
<div class="m" style="left:603px;top:1px;width:94px;overflow:hidden">TCP</div>
<div class="m" style="left:699px;top:1px;width:55px;text-align:right;overflow:hidden">66</div>
<div class="m" style="left:761px;top:1px;width:373px;overflow:hidden">37966 → 443 [ACK] Seq=211 Ack=1464 Win=251 Len=0</div>
</div>
<div class="a" style="left:0;top:158px;width:1136px;height:19px;background:#e7e6ff;color:#12272e">
<div class="m" style="left:0px;top:1px;width:97px;text-align:right;overflow:hidden">18</div>
<div class="m" style="left:104px;top:1px;width:94px;overflow:hidden">0.005084000</div>
<div class="m" style="left:204px;top:1px;width:94px;overflow:hidden">192.168.0.192</div>
<div class="m" style="left:300px;top:1px;width:97px;text-align:right;overflow:hidden">37966</div>
<div class="m" style="left:404px;top:1px;width:111px;overflow:hidden">106.186.112.116</div>
<div class="m" style="left:517px;top:1px;width:79px;text-align:right;overflow:hidden">443</div>
<div class="m" style="left:603px;top:1px;width:94px;overflow:hidden">TLSv1.2</div>
<div class="m" style="left:699px;top:1px;width:55px;text-align:right;overflow:hidden">296</div>
<div class="m" style="left:761px;top:1px;width:373px;overflow:hidden">Client Key Exchange, Change Cipher Spec, Encrypted Handshake</div>
</div>
<div class="a" style="left:0;top:177px;width:1136px;height:19px;background:#e4ffc7;color:#12272e">
<div class="m" style="left:0px;top:1px;width:97px;text-align:right;overflow:hidden">19</div>
<div class="m" style="left:104px;top:1px;width:94px;overflow:hidden">0.000195000</div>
<div class="m" style="left:204px;top:1px;width:94px;overflow:hidden">192.168.0.192</div>
<div class="m" style="left:300px;top:1px;width:97px;text-align:right;overflow:hidden">37966</div>
<div class="m" style="left:404px;top:1px;width:111px;overflow:hidden">106.186.112.116</div>
<div class="m" style="left:517px;top:1px;width:79px;text-align:right;overflow:hidden">443</div>
<div class="m" style="left:603px;top:1px;width:94px;overflow:hidden">HTTP2</div>
<div class="m" style="left:699px;top:1px;width:55px;text-align:right;overflow:hidden">144</div>
<div class="m" style="left:761px;top:1px;width:373px;overflow:hidden">Magic, SETTINGS, WINDOW_UPDATE</div>
</div>
<div class="a" style="left:0;top:196px;width:1136px;height:19px;background:#e7e6ff;color:#12272e">
<div class="m" style="left:0px;top:1px;width:97px;text-align:right;overflow:hidden">20</div>
<div class="m" style="left:104px;top:1px;width:94px;overflow:hidden">0.048348000</div>
<div class="m" style="left:204px;top:1px;width:94px;overflow:hidden">106.186.112.</div>
<div class="m" style="left:300px;top:1px;width:97px;text-align:right;overflow:hidden">443</div>
<div class="m" style="left:404px;top:1px;width:111px;overflow:hidden">192.168.0.192</div>
<div class="m" style="left:517px;top:1px;width:79px;text-align:right;overflow:hidden">37965</div>
<div class="m" style="left:603px;top:1px;width:94px;overflow:hidden">TCP</div>
<div class="m" style="left:699px;top:1px;width:55px;text-align:right;overflow:hidden">66</div>
<div class="m" style="left:761px;top:1px;width:373px;overflow:hidden">443 → 37965 [ACK] Seq=1464 Ack=723 Win=252 Len=0</div>
</div>
<div class="a" style="left:0;top:215px;width:1136px;height:19px;background:#9d9890;color:#ffffff">
<div class="m" style="left:0px;top:1px;width:97px;text-align:right;overflow:hidden">21</div>
<div class="m" style="left:104px;top:1px;width:94px;overflow:hidden">0.000017000</div>
<div class="m" style="left:204px;top:1px;width:94px;overflow:hidden">106.186.112.</div>
<div class="m" style="left:300px;top:1px;width:97px;text-align:right;overflow:hidden">443</div>
<div class="m" style="left:404px;top:1px;width:111px;overflow:hidden">192.168.0.192</div>
<div class="m" style="left:517px;top:1px;width:79px;text-align:right;overflow:hidden">37965</div>
<div class="m" style="left:603px;top:1px;width:94px;overflow:hidden">HTTP2</div>
<div class="m" style="left:699px;top:1px;width:55px;text-align:right;overflow:hidden">164</div>
<div class="m" style="left:761px;top:1px;width:373px;overflow:hidden">SETTINGS</div>
</div>
<div class="a" style="left:0;top:234px;width:1136px;height:19px;background:#e4ffc7;color:#12272e">
<div class="m" style="left:0px;top:1px;width:97px;text-align:right;overflow:hidden">22</div>
<div class="m" style="left:104px;top:1px;width:94px;overflow:hidden">0.000222000</div>
<div class="m" style="left:204px;top:1px;width:94px;overflow:hidden">192.168.0.192</div>
<div class="m" style="left:300px;top:1px;width:97px;text-align:right;overflow:hidden">37965</div>
<div class="m" style="left:404px;top:1px;width:111px;overflow:hidden">106.186.112.116</div>
<div class="m" style="left:517px;top:1px;width:79px;text-align:right;overflow:hidden">443</div>
<div class="m" style="left:603px;top:1px;width:94px;overflow:hidden">HTTP2</div>
<div class="m" style="left:699px;top:1px;width:55px;text-align:right;overflow:hidden">103</div>
<div class="m" style="left:761px;top:1px;width:373px;overflow:hidden">SETTINGS</div>
</div>
<div class="a" style="left:0;top:253px;width:1136px;height:19px;background:#e4ffc7;color:#12272e">
<div class="m" style="left:0px;top:1px;width:97px;text-align:right;overflow:hidden">23</div>
<div class="m" style="left:104px;top:1px;width:94px;overflow:hidden">0.000139000</div>
<div class="m" style="left:204px;top:1px;width:94px;overflow:hidden">106.186.112.</div>
<div class="m" style="left:300px;top:1px;width:97px;text-align:right;overflow:hidden">443</div>
<div class="m" style="left:404px;top:1px;width:111px;overflow:hidden">192.168.0.192</div>
<div class="m" style="left:517px;top:1px;width:79px;text-align:right;overflow:hidden">37965</div>
<div class="m" style="left:603px;top:1px;width:94px;overflow:hidden">HTTP2</div>
<div class="m" style="left:699px;top:1px;width:55px;text-align:right;overflow:hidden">103</div>
<div class="m" style="left:761px;top:1px;width:373px;overflow:hidden">SETTINGS</div>
</div>
<div class="a" style="left:0;top:272px;width:1136px;height:19px;background:#e7e6ff;color:#12272e">
<div class="m" style="left:0px;top:1px;width:97px;text-align:right;overflow:hidden">24</div>
<div class="m" style="left:104px;top:1px;width:94px;overflow:hidden">0.001705000</div>
<div class="m" style="left:204px;top:1px;width:94px;overflow:hidden">106.186.112.</div>
<div class="m" style="left:300px;top:1px;width:97px;text-align:right;overflow:hidden">443</div>
<div class="m" style="left:404px;top:1px;width:111px;overflow:hidden">192.168.0.192</div>
<div class="m" style="left:517px;top:1px;width:79px;text-align:right;overflow:hidden">37965</div>
<div class="m" style="left:603px;top:1px;width:94px;overflow:hidden">TCP</div>
<div class="m" style="left:699px;top:1px;width:55px;text-align:right;overflow:hidden">2962</div>
<div class="m" style="left:761px;top:1px;width:373px;overflow:hidden">[TCP segment of a reassembled PDU]</div>
</div>
<div class="a" style="left:0;top:291px;width:1136px;height:19px;background:#e7e6ff;color:#12272e">
<div class="m" style="left:0px;top:1px;width:97px;text-align:right;overflow:hidden">25</div>
<div class="m" style="left:104px;top:1px;width:94px;overflow:hidden">0.000017000</div>
<div class="m" style="left:204px;top:1px;width:94px;overflow:hidden">192.168.0.192</div>
<div class="m" style="left:300px;top:1px;width:97px;text-align:right;overflow:hidden">37965</div>
<div class="m" style="left:404px;top:1px;width:111px;overflow:hidden">106.186.112.116</div>
<div class="m" style="left:517px;top:1px;width:79px;text-align:right;overflow:hidden">443</div>
<div class="m" style="left:603px;top:1px;width:94px;overflow:hidden">TCP</div>
<div class="m" style="left:699px;top:1px;width:55px;text-align:right;overflow:hidden">66</div>
<div class="m" style="left:761px;top:1px;width:373px;overflow:hidden">37965 → 443 [ACK] Seq=760 Ack=4495 Win=297 Len=0</div>
</div>
<div class="a" style="left:0;top:310px;width:1136px;height:19px;background:#e4ffc7;color:#12272e">
<div class="m" style="left:0px;top:1px;width:97px;text-align:right;overflow:hidden">26</div>
<div class="m" style="left:104px;top:1px;width:94px;overflow:hidden">0.000169000</div>
<div class="m" style="left:204px;top:1px;width:94px;overflow:hidden">106.186.112.</div>
<div class="m" style="left:300px;top:1px;width:97px;text-align:right;overflow:hidden">443</div>
<div class="m" style="left:404px;top:1px;width:111px;overflow:hidden">192.168.0.192</div>
<div class="m" style="left:517px;top:1px;width:79px;text-align:right;overflow:hidden">37965</div>
<div class="m" style="left:603px;top:1px;width:94px;overflow:hidden">HTTP2</div>
<div class="m" style="left:699px;top:1px;width:55px;text-align:right;overflow:hidden">1152</div>
<div class="m" style="left:761px;top:1px;width:373px;overflow:hidden">HEADERS, DATA</div>
</div>
<div class="a" style="left:0;top:329px;width:1136px;height:19px;background:#e7e6ff;color:#12272e">
<div class="m" style="left:0px;top:1px;width:97px;text-align:right;overflow:hidden">27</div>
<div class="m" style="left:104px;top:1px;width:94px;overflow:hidden">0.000016000</div>
<div class="m" style="left:204px;top:1px;width:94px;overflow:hidden">106.186.112.</div>
<div class="m" style="left:300px;top:1px;width:97px;text-align:right;overflow:hidden">443</div>
<div class="m" style="left:404px;top:1px;width:111px;overflow:hidden">192.168.0.192</div>
<div class="m" style="left:517px;top:1px;width:79px;text-align:right;overflow:hidden">37965</div>
<div class="m" style="left:603px;top:1px;width:94px;overflow:hidden">TCP</div>
<div class="m" style="left:699px;top:1px;width:55px;text-align:right;overflow:hidden">1514</div>
<div class="m" style="left:761px;top:1px;width:373px;overflow:hidden">[TCP segment of a reassembled PDU]</div>
</div>
<div class="a" style="left:0;top:348px;width:1136px;height:19px;background:#e7e6ff;color:#12272e">
<div class="m" style="left:0px;top:1px;width:97px;text-align:right;overflow:hidden">28</div>
<div class="m" style="left:104px;top:1px;width:94px;overflow:hidden">0.000009000</div>
<div class="m" style="left:204px;top:1px;width:94px;overflow:hidden">192.168.0.192</div>
<div class="m" style="left:300px;top:1px;width:97px;text-align:right;overflow:hidden">37965</div>
<div class="m" style="left:404px;top:1px;width:111px;overflow:hidden">106.186.112.116</div>
<div class="m" style="left:517px;top:1px;width:79px;text-align:right;overflow:hidden">443</div>
<div class="m" style="left:603px;top:1px;width:94px;overflow:hidden">TCP</div>
<div class="m" style="left:699px;top:1px;width:55px;text-align:right;overflow:hidden">66</div>
<div class="m" style="left:761px;top:1px;width:373px;overflow:hidden">37965 → 443 [ACK] Seq=760 Ack=7029 Win=342 Len=0</div>
</div>
<div class="a" style="left:0;top:367px;width:1136px;height:19px;background:#e7e6ff;color:#12272e">
<div class="m" style="left:0px;top:1px;width:97px;text-align:right;overflow:hidden">29</div>
<div class="m" style="left:104px;top:1px;width:94px;overflow:hidden">0.000221000</div>
<div class="m" style="left:204px;top:1px;width:94px;overflow:hidden">106.186.112.</div>
<div class="m" style="left:300px;top:1px;width:97px;text-align:right;overflow:hidden">443</div>
<div class="m" style="left:404px;top:1px;width:111px;overflow:hidden">192.168.0.192</div>
<div class="m" style="left:517px;top:1px;width:79px;text-align:right;overflow:hidden">37965</div>
<div class="m" style="left:603px;top:1px;width:94px;overflow:hidden">TCP</div>
<div class="m" style="left:699px;top:1px;width:55px;text-align:right;overflow:hidden">1514</div>
<div class="m" style="left:761px;top:1px;width:373px;overflow:hidden">[TCP segment of a reassembled PDU]</div>
</div>
<div class="a" style="left:0;top:386px;width:1136px;height:19px;background:#e4ffc7;color:#12272e">
<div class="m" style="left:0px;top:1px;width:97px;text-align:right;overflow:hidden">30</div>
<div class="m" style="left:104px;top:1px;width:94px;overflow:hidden">0.000005000</div>
<div class="m" style="left:204px;top:1px;width:94px;overflow:hidden">106.186.112.</div>
<div class="m" style="left:300px;top:1px;width:97px;text-align:right;overflow:hidden">443</div>
<div class="m" style="left:404px;top:1px;width:111px;overflow:hidden">192.168.0.192</div>
<div class="m" style="left:517px;top:1px;width:79px;text-align:right;overflow:hidden">37965</div>
<div class="m" style="left:603px;top:1px;width:94px;overflow:hidden">HTTP2</div>
<div class="m" style="left:699px;top:1px;width:55px;text-align:right;overflow:hidden">670</div>
<div class="m" style="left:761px;top:1px;width:373px;overflow:hidden">DATA, DATA</div>
</div>
<div class="a" style="left:0;top:405px;width:1136px;height:19px;background:#e7e6ff;color:#12272e">
<div class="m" style="left:0px;top:1px;width:97px;text-align:right;overflow:hidden">31</div>
<div class="m" style="left:104px;top:1px;width:94px;overflow:hidden">0.000012000</div>
<div class="m" style="left:204px;top:1px;width:94px;overflow:hidden">192.168.0.192</div>
<div class="m" style="left:300px;top:1px;width:97px;text-align:right;overflow:hidden">37965</div>
<div class="m" style="left:404px;top:1px;width:111px;overflow:hidden">106.186.112.116</div>
<div class="m" style="left:517px;top:1px;width:79px;text-align:right;overflow:hidden">443</div>
<div class="m" style="left:603px;top:1px;width:94px;overflow:hidden">TCP</div>
<div class="m" style="left:699px;top:1px;width:55px;text-align:right;overflow:hidden">66</div>
<div class="m" style="left:761px;top:1px;width:373px;overflow:hidden">37965 → 443 [ACK] Seq=760 Ack=8379 Win=365 Len=0</div>
</div>
</div>
<div class="a" style="left:1138px;top:143px;width:19px;height:442px;background:#dcdad5;"></div>
<div class="a" style="left:1141px;top:144px;width:15px;height:441px;background:#9e9a93;"></div>
<div class="a" style="left:1141px;top:144px;width:1px;height:441px;background:#86827a;"></div>
<div class="a" style="left:1155px;top:144px;width:1px;height:441px;background:#86827a;"></div>
<div class="a" style="left:1142px;top:145px;width:13px;height:14px;background:#dcdad5;"></div>
<div class="a" style="left:1142px;top:145px;width:13px;height:1px;background:#f0efec;"></div>
<div class="a" style="left:1142px;top:145px;width:1px;height:14px;background:#f0efec;"></div>
<div class="a" style="left:1142px;top:158px;width:13px;height:1px;background:#86827a;"></div>
<div class="a" style="left:1154px;top:145px;width:1px;height:14px;background:#86827a;"></div>
<div class="a" style="left:1142px;top:176px;width:13px;height:51px;background:#dcdad5;"></div>
<div class="a" style="left:1142px;top:176px;width:13px;height:1px;background:#f0efec;"></div>
<div class="a" style="left:1142px;top:176px;width:1px;height:51px;background:#f0efec;"></div>
<div class="a" style="left:1142px;top:226px;width:13px;height:1px;background:#86827a;"></div>
<div class="a" style="left:1154px;top:176px;width:1px;height:51px;background:#86827a;"></div>
<div class="a" style="left:1142px;top:570px;width:13px;height:14px;background:#dcdad5;"></div>
<div class="a" style="left:1142px;top:570px;width:13px;height:1px;background:#f0efec;"></div>
<div class="a" style="left:1142px;top:570px;width:1px;height:14px;background:#f0efec;"></div>
<div class="a" style="left:1142px;top:583px;width:13px;height:1px;background:#86827a;"></div>
<div class="a" style="left:1154px;top:570px;width:1px;height:14px;background:#86827a;"></div>
<svg style="left:1142px;top:145px" width="13" height="14"><path d="M3.3 8.6 L6.5 5.4 L9.7 8.6" stroke="#000" stroke-width="1.6" fill="none"/></svg>
<svg style="left:1142px;top:570px" width="13" height="14"><path d="M3.3 5.4 L6.5 8.6 L9.7 5.4" stroke="#000" stroke-width="1.6" fill="none"/></svg>
<div class="a" style="left:2px;top:590px;width:1155px;height:171px;background:#dcdad5;"></div>
<div class="a" style="left:2px;top:590px;width:1137px;height:170px;background:#ffffff;"></div>
<div class="a" style="left:2px;top:590px;width:1137px;height:1px;background:#86827a;"></div>
<div class="a" style="left:2px;top:590px;width:1px;height:170px;background:#86827a;"></div>
<div class="m" style="left:37px;top:592px;color:#000">Stream: SETTINGS, Stream ID: 0, Length 10</div>
<svg style="left:19px;top:597px" width="14" height="8"><path d="M0.7 0.7 L13.3 0.7 L7 7.3 Z" fill="none" stroke="#8f8a82" stroke-width="1.2"/></svg>
<div class="m" style="left:52px;top:611px;color:#000">...0 0000 0000 1010 = Length: 10</div>
<div class="m" style="left:52px;top:630px;color:#000">000. .... .... .... = Reserved: 0</div>
<div class="m" style="left:52px;top:649px;color:#000">Type: SETTINGS (4)</div>
<div class="m" style="left:52px;top:668px;color:#000">Flags: 0x00</div>
<svg style="left:38px;top:669px" width="9" height="15"><path d="M0.7 0.8 L7.2 7.2 L0.7 13.6 Z" fill="none" stroke="#8f8a82" stroke-width="1.2"/></svg>
<div class="m" style="left:52px;top:687px;color:#000">0... .... .... .... .... .... .... .... = Reserved: 0x00000000</div>
<div class="m" style="left:52px;top:706px;color:#000">.000 0000 0000 0000 0000 0000 0000 0000 = Stream Identifier: 0</div>
<div class="a" style="left:3px;top:724px;width:1135px;height:19px;background:#9d9890;"></div>
<div class="m" style="left:52px;top:725px;color:#fff">Settings - Max concurrent streams : 100</div>
<svg style="left:38px;top:726px" width="9" height="15"><path d="M0.7 0.8 L7.2 7.2 L0.7 13.6 Z" fill="#fff" stroke="#8f8a82" stroke-width="1.2"/></svg>
<div class="m" style="left:52px;top:744px;color:#000">Settings - Initial Windows size : 65535</div>
<svg style="left:38px;top:745px" width="9" height="15"><path d="M0.7 0.8 L7.2 7.2 L0.7 13.6 Z" fill="none" stroke="#8f8a82" stroke-width="1.2"/></svg>
<div class="a" style="left:1138px;top:590px;width:19px;height:171px;background:#dcdad5;"></div>
<div class="a" style="left:1141px;top:590px;width:15px;height:171px;background:#9e9a93;"></div>
<div class="a" style="left:1141px;top:590px;width:1px;height:171px;background:#86827a;"></div>
<div class="a" style="left:1155px;top:590px;width:1px;height:171px;background:#86827a;"></div>
<div class="a" style="left:1142px;top:591px;width:13px;height:14px;background:#dcdad5;"></div>
<div class="a" style="left:1142px;top:591px;width:13px;height:1px;background:#f0efec;"></div>
<div class="a" style="left:1142px;top:591px;width:1px;height:14px;background:#f0efec;"></div>
<div class="a" style="left:1142px;top:604px;width:13px;height:1px;background:#86827a;"></div>
<div class="a" style="left:1154px;top:591px;width:1px;height:14px;background:#86827a;"></div>
<div class="a" style="left:1142px;top:662px;width:13px;height:82px;background:#dcdad5;"></div>
<div class="a" style="left:1142px;top:662px;width:13px;height:1px;background:#f0efec;"></div>
<div class="a" style="left:1142px;top:662px;width:1px;height:82px;background:#f0efec;"></div>
<div class="a" style="left:1142px;top:743px;width:13px;height:1px;background:#86827a;"></div>
<div class="a" style="left:1154px;top:662px;width:1px;height:82px;background:#86827a;"></div>
<div class="a" style="left:1142px;top:746px;width:13px;height:14px;background:#dcdad5;"></div>
<div class="a" style="left:1142px;top:746px;width:13px;height:1px;background:#f0efec;"></div>
<div class="a" style="left:1142px;top:746px;width:1px;height:14px;background:#f0efec;"></div>
<div class="a" style="left:1142px;top:759px;width:13px;height:1px;background:#86827a;"></div>
<div class="a" style="left:1154px;top:746px;width:1px;height:14px;background:#86827a;"></div>
<svg style="left:1142px;top:591px" width="13" height="14"><path d="M3.3 8.6 L6.5 5.4 L9.7 8.6" stroke="#000" stroke-width="1.6" fill="none"/></svg>
<svg style="left:1142px;top:746px" width="13" height="14"><path d="M3.3 5.4 L6.5 8.6 L9.7 5.4" stroke="#000" stroke-width="1.6" fill="none"/></svg>
<div class="a" style="left:2px;top:766px;width:1155px;height:214px;background:#dcdad5;"></div>
<div class="a" style="left:2px;top:766px;width:1154px;height:1px;background:#f0efec;"></div>
<div class="a" style="left:2px;top:766px;width:1px;height:214px;background:#f0efec;"></div>
<div class="a" style="left:1156px;top:766px;width:1px;height:214px;background:#86827a;"></div>
<div class="a" style="left:6px;top:770px;width:1147px;height:207px;background:#ffffff;"></div>
<div class="a" style="left:5px;top:769px;width:1148px;height:1px;background:#86827a;"></div>
<div class="a" style="left:5px;top:769px;width:1px;height:208px;background:#86827a;"></div>
<div class="a" style="left:1153px;top:769px;width:1px;height:209px;background:#eeedea;"></div>
<div class="a" style="left:5px;top:977px;width:1149px;height:1px;background:#eeedea;"></div>
<div class="a" style="left:56px;top:770px;width:200px;height:15px;background:#c9c6bf;"></div>
<div class="a" style="left:256px;top:770px;width:112px;height:15px;background:#4b6a8a;"></div>
<div class="a" style="left:368px;top:770px;width:72px;height:15px;background:#c9c6bf;"></div>
<div class="a" style="left:464px;top:770px;width:72px;height:15px;background:#c9c6bf;"></div>
<div class="a" style="left:536px;top:770px;width:40px;height:15px;background:#4b6a8a;"></div>
<div class="a" style="left:576px;top:770px;width:24px;height:15px;background:#c9c6bf;"></div>
<div class="a" style="left:56px;top:785px;width:40px;height:15px;background:#c9c6bf;"></div>
<div class="a" style="left:464px;top:785px;width:16px;height:15px;background:#c9c6bf;"></div>
<div class="m" style="left:8px;top:771px;line-height:15px;color:#000">0000  00 0a 04 00 00 00 00 00  <span style="color:#fff">03 00 00 00 64</span> 04 00 00   ........ <span style="color:#fff">....d</span>...<br>0010  ff ff                                              ..</div>
<div class="a" style="left:2px;top:980px;width:1155px;height:24px;background:#dcdad5;"></div>
<div class="a" style="left:2px;top:980px;width:127px;height:1px;background:#86827a;"></div>
<div class="a" style="left:2px;top:980px;width:1px;height:24px;background:#86827a;"></div>
<div class="a" style="left:128px;top:980px;width:1px;height:24px;background:#86827a;"></div>
<div class="a" style="left:3px;top:981px;width:125px;height:1px;background:#f0efec;"></div>
<div class="a" style="left:3px;top:981px;width:1px;height:22px;background:#f0efec;"></div>
<div class="t" style="left:5.5px;top:983px;color:#000;letter-spacing:0.606px;">Frame (164 bytes)</div>
<div class="a" style="left:128px;top:980px;width:218px;height:1px;background:#86827a;"></div>
<div class="a" style="left:345px;top:980px;width:1px;height:24px;background:#86827a;"></div>
<div class="a" style="left:129px;top:981px;width:216px;height:1px;background:#f0efec;"></div>
<div class="a" style="left:129px;top:981px;width:1px;height:22px;background:#f0efec;"></div>
<div class="t" style="left:130.5px;top:983px;color:#000;letter-spacing:0.567px;">Decrypted SSL record (16 bytes)</div>
<div class="a" style="left:346px;top:981px;width:204px;height:22px;background:#f0efec;"></div>
<div class="a" style="left:347px;top:983px;width:201px;height:19px;background:#9d9890;"></div>
<div class="t" style="left:348.4px;top:983px;color:#ffffff;letter-spacing:0.632px;">Decrypted SSL data (18 bytes)</div>
<div class="a" style="left:550px;top:980px;width:607px;height:1px;background:#86827a;"></div>
<div class="a" style="left:550px;top:980px;width:1px;height:24px;background:#86827a;"></div>
<div class="a" style="left:1156px;top:980px;width:1px;height:24px;background:#86827a;"></div>
<div class="a" style="left:551px;top:981px;width:605px;height:1px;background:#f0efec;"></div>
<div class="a" style="left:551px;top:981px;width:1px;height:22px;background:#f0efec;"></div>
<div class="a" style="left:2px;top:1003px;width:1155px;height:1px;background:#86827a;"></div>
<svg style="left:0;top:1006px" width="60" height="36"><defs><linearGradient id="yb" x1="0" y1="0" x2="0" y2="1"><stop offset="0" stop-color="#f0ef7a"/><stop offset="0.5" stop-color="#d6d41c"/><stop offset="1" stop-color="#f2ef40"/></linearGradient></defs><circle cx="13.1" cy="16.9" r="6.6" fill="url(#yb)" stroke="#222" stroke-width="1"/><rect x="29.8" y="9.8" width="12" height="14.7" rx="1.2" fill="#fafaf8" stroke="#777" stroke-width="1"/><path d="M30 13.5 L36 13.5 M33 10.3 L33 16.8" stroke="#3ca012" stroke-width="2.6"/><path d="M32.8 22.5 L42.6 12.2" stroke="#e88a2a" stroke-width="3.2" stroke-linecap="butt"/><path d="M42 12.8 L44.2 10.5" stroke="#e03838" stroke-width="3.2" stroke-linecap="round"/><path d="M31.8 23.8 L33.6 21.6" stroke="#222" stroke-width="1.5"/></svg>
<div class="a" style="left:60px;top:1011px;width:230px;height:25px;background:#dcdad5;"></div>
<div class="a" style="left:60px;top:1011px;width:230px;height:1px;background:#86827a;"></div>
<div class="a" style="left:60px;top:1011px;width:1px;height:25px;background:#86827a;"></div>
<div class="a" style="left:60px;top:1035px;width:230px;height:1px;background:#f0efec;"></div>
<div class="a" style="left:289px;top:1011px;width:1px;height:25px;background:#f0efec;"></div>
<div class="t" style="left:68.3px;top:1014px;color:#000;letter-spacing:0.661px;">Settings (http2.settings), 5 bytes</div>
<div class="a" style="left:315px;top:1011px;width:295px;height:25px;background:#dcdad5;"></div>
<div class="a" style="left:315px;top:1011px;width:295px;height:1px;background:#86827a;"></div>
<div class="a" style="left:315px;top:1011px;width:1px;height:25px;background:#86827a;"></div>
<div class="a" style="left:315px;top:1035px;width:295px;height:1px;background:#f0efec;"></div>
<div class="a" style="left:609px;top:1011px;width:1px;height:25px;background:#f0efec;"></div>
<div class="t" style="left:323.7px;top:1014px;color:#000;letter-spacing:0.425px;">Packets: 179 · Displayed: 179 (100.0%)  · ...</div>
<div class="a" style="left:635px;top:1011px;width:512px;height:25px;background:#dcdad5;"></div>
<div class="a" style="left:635px;top:1011px;width:512px;height:1px;background:#86827a;"></div>
<div class="a" style="left:635px;top:1011px;width:1px;height:25px;background:#86827a;"></div>
<div class="a" style="left:635px;top:1035px;width:512px;height:1px;background:#f0efec;"></div>
<div class="a" style="left:1146px;top:1011px;width:1px;height:25px;background:#f0efec;"></div>
<div class="t" style="left:643.5px;top:1014px;color:#000;letter-spacing:0.433px;">Profile: Default</div>
<div class="a" style="left:0px;top:1042px;width:1159px;height:4px;background:#d6d2ce;"></div>
<svg style="left:0;top:1040px" width="6" height="6"><path d="M0 1 L5 6 L0 6 Z" fill="#3a3a3a"/></svg>
<svg style="left:1153px;top:1040px" width="6" height="6"><path d="M6 1 L1 6 L6 6 Z" fill="#3a3a3a"/></svg>
<svg style="left:0;top:0" width="3" height="3"><path d="M0 0 L2 0 L0 2 Z" fill="#3a3a3a"/></svg>
<svg style="left:1156px;top:0" width="3" height="3"><path d="M1 0 L3 0 L3 2 Z" fill="#3a3a3a"/></svg>
</div></body></html>
